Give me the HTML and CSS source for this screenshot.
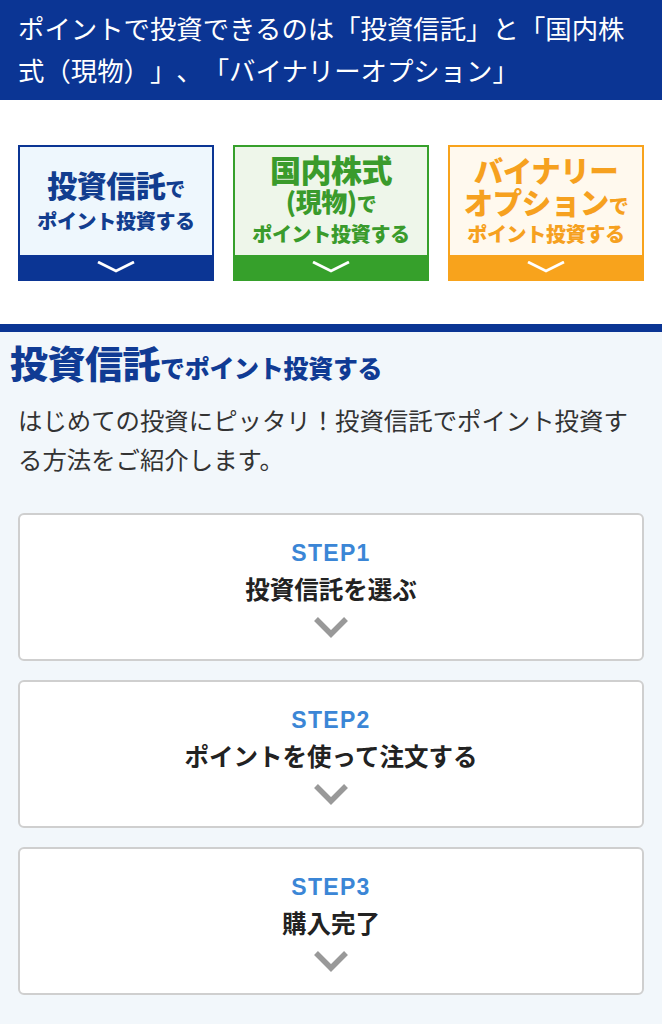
FILE: index.html
```html
<!DOCTYPE html>
<html lang="ja">
<head>
<meta charset="utf-8">
<link rel="stylesheet" href="styles.css">
</head>
<body>
<header class="lead">
  <p>ポイントで投資できるのは「投資信託」と「国内株<br>式（現物）」、「バイナリーオプション」</p>
</header>

<nav class="menu">
  <a class="tile tile-blue" href="#">
    <span class="tile-body">
      <span class="l1"><span class="big">投資信託</span><span class="small">で</span></span>
      <span class="l2">ポイント投資する</span>
    </span>
    <span class="tile-band"><svg viewBox="0 0 40 12" width="40" height="12"><polyline points="2,1 20,10 38,1" fill="none" stroke="#fff" stroke-width="2.8"/></svg></span>
  </a>
  <a class="tile tile-green" href="#">
    <span class="tile-body">
      <span class="l1"><span class="big wide">国内株式</span></span>
      <span class="l1b"><span class="mid">(現物)</span><span class="small">で</span></span>
      <span class="l2">ポイント投資する</span>
    </span>
    <span class="tile-band"><svg viewBox="0 0 40 12" width="40" height="12"><polyline points="2,1 20,10 38,1" fill="none" stroke="#fff" stroke-width="2.8"/></svg></span>
  </a>
  <a class="tile tile-orange" href="#">
    <span class="tile-body">
      <span class="l1"><span class="big">バイナリー</span></span>
      <span class="l1b"><span class="big">オプション</span><span class="small">で</span></span>
      <span class="l2">ポイント投資する</span>
    </span>
    <span class="tile-band"><svg viewBox="0 0 40 12" width="40" height="12"><polyline points="2,1 20,10 38,1" fill="none" stroke="#fff" stroke-width="2.8"/></svg></span>
  </a>
</nav>

<section class="fund">
  <h2 class="fund-title"><span class="big">投資信託</span><span class="small">でポイント投資する</span></h2>
  <p class="fund-text">はじめての投資にピッタリ！投資信託でポイント投資する方法をご紹介します。</p>

  <div class="steps">
    <div class="step">
      <p class="step-no">STEP1</p>
      <p class="step-name">投資信託を選ぶ</p>
      <svg class="step-chev" viewBox="0 0 34 22" width="34" height="22"><polyline points="2,3 17,18 32,3" fill="none" stroke="#999" stroke-width="5.5"/></svg>
    </div>
    <div class="step">
      <p class="step-no">STEP2</p>
      <p class="step-name">ポイントを使って注文する</p>
      <svg class="step-chev" viewBox="0 0 34 22" width="34" height="22"><polyline points="2,3 17,18 32,3" fill="none" stroke="#999" stroke-width="5.5"/></svg>
    </div>
    <div class="step">
      <p class="step-no">STEP3</p>
      <p class="step-name">購入完了</p>
      <svg class="step-chev" viewBox="0 0 34 22" width="34" height="22"><polyline points="2,3 17,18 32,3" fill="none" stroke="#999" stroke-width="5.5"/></svg>
    </div>
  </div>
</section>
</body>
</html>
```

FILE: styles.css
```css
* { box-sizing: border-box; }
html, body {
  margin: 0;
  padding: 0;
}
body {
  font-family: "Noto Sans CJK JP", "Noto Sans", sans-serif;
  background: #f2f7fb;
  width: 662px;
  text-spacing-trim: space-all;
}
p { margin: 0; }

.lead {
  background: #0b3594;
  color: #fff;
  padding: 7px 16px 8px 18px;
  height: 100px;
}
.lead p {
  font-size: 26.4px;
  line-height: 42px;
  font-weight: 400;
  white-space: nowrap;
}

.menu {
  background: #fff;
  display: flex;
  gap: 19px;
  padding: 45px 18px 43px 18px;
}
.tile {
  width: 196px;
  height: 136px;
  display: flex;
  flex-direction: column;
  text-decoration: none;
  border: 2px solid;
  font-weight: 900;
}
.tile-body {
  flex: 1;
  display: flex;
  flex-direction: column;
  align-items: center;
  justify-content: center;
  padding-top: 2px;
}
.tile-band {
  height: 24px;
  display: flex;
  align-items: center;
  justify-content: center;
}
.tile .l1, .tile .l1b {
  display: flex;
  align-items: baseline;
  letter-spacing: -0.5px;
}
.tile .big { font-size: 30px; line-height: 32px; }
.tile .big.wide { font-size: 31px; }
.tile .mid { font-size: 26px; line-height: 32px; }
.tile .small { font-size: 20px; line-height: 32px; }
.tile .l2 { font-size: 20px; line-height: 32px; letter-spacing: -0.3px; }

.tile-green .l1, .tile-orange .l1 { height: 30px; line-height: 30px; }
.tile-green .l1 .big, .tile-orange .l1 .big { line-height: 30px; }
.tile-green .l1b, .tile-orange .l1b { height: 34px; }
.tile-green .l1b > span, .tile-orange .l1b > span { line-height: 34px; }
.tile-green .l2, .tile-orange .l2 { line-height: 32px; }
.tile-orange .big { font-size: 29.5px; }

.tile-blue { border-color: #0b3594; background: #eef7fd; color: #123d8f; }
.tile-blue .tile-band { background: #0b3594; }
.tile-green { border-color: #36a02b; background: #eef6ea; color: #3a9b2c; }
.tile-green .tile-band { background: #36a02b; }
.tile-orange { border-color: #f8a31c; background: #fff9ee; color: #f6a11f; }
.tile-orange .tile-band { background: #f8a31c; }

.fund {
  border-top: 8px solid #0b3594;
  padding: 8px 18px 27px 18px;
}
.fund-title {
  margin: 0 0 11px -8px;
  color: #103b94;
  font-weight: 900;
  display: flex;
  align-items: baseline;
  line-height: 44px;
}
.fund-title .big { font-size: 38px; letter-spacing: -0.5px; }
.fund-title .small { font-size: 25px; letter-spacing: -0.3px; }

.fund-text {
  font-size: 24.4px;
  line-height: 39px;
  color: #333;
  margin-bottom: 35px;
}

.steps {
  display: flex;
  flex-direction: column;
  gap: 19px;
}
.step {
  background: #fff;
  border: 2px solid #cfcfcf;
  border-radius: 6px;
  height: 148px;
  padding: 25px 0 0;
  display: flex;
  flex-direction: column;
  align-items: center;
}
.step-no {
  font-family: "Liberation Sans", Arial, sans-serif;
  font-weight: 700;
  font-size: 23px;
  letter-spacing: 1.3px;
  line-height: 26px;
  color: #3b86d6;
}
.step-name {
  margin-top: 8px;
  font-size: 24.5px;
  line-height: 30px;
  font-weight: 700;
  color: #222;
}
.step-chev {
  margin-top: 12px;
  display: block;
}
```
